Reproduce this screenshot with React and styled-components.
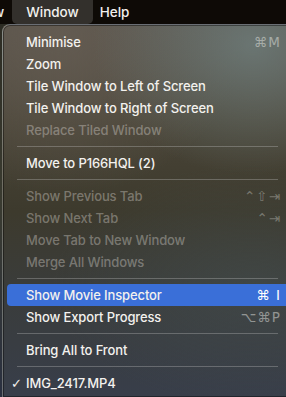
import React from "react";
import styled, { createGlobalStyle } from "styled-components";

const Global = createGlobalStyle`
  html, body { margin: 0; padding: 0; }
  body {
    width: 286px; height: 397px; overflow: hidden;
    background: linear-gradient(180deg, #2b2a22 0%, #3a3b30 50%, #2a3040 100%);
    font-family: Inter, "Noto Sans", sans-serif;
    -webkit-font-smoothing: antialiased;
  }
`;

const Screen = styled.div`
  display: flex;
  flex-direction: column;
  width: 286px;
  height: 397px;
  overflow: hidden;
`;

const MenuBar = styled.div`
  height: 24px;
  flex: none;
  background: #0e0a06;
  display: flex;
  align-items: stretch;
  color: #f2f0ee;
  font-size: 13.5px;
  font-weight: 500;
  overflow: hidden;
`;

const BarItem = styled.div`
  display: flex;
  align-items: center;
  flex: none;
  padding: ${(p) => p.$pad || "0 12px"};
  margin-left: ${(p) => p.$ml || 0}px;
  border-radius: 0 0 5px 5px;
  background: ${(p) => (p.$active ? "#33302c" : "transparent")};
`;

const Menu = styled.div`
  margin-left: 2px;
  width: 292px;
  flex: 1;
  border-radius: 8px 8px 0 0;
  border: 1px solid rgba(200, 200, 195, 0.35);
  border-right: none;
  border-bottom: none;
  box-shadow: inset 0 0 0 1px rgba(0,0,0,0.4);
  padding: 6px 0 0 0;
  box-sizing: border-box;
  display: flex;
  flex-direction: column;
  background:
    radial-gradient(ellipse 160px 130px at 250px 20px, rgba(110,124,122,0.85), rgba(110,124,122,0) 100%),
    radial-gradient(ellipse 180px 160px at 60px 10px, rgba(100,92,82,0.9), rgba(100,92,82,0) 100%),
    radial-gradient(ellipse 200px 120px at 250px 260px, rgba(70,80,80,0.5), rgba(70,80,80,0) 100%),
    linear-gradient(180deg, #58524a 0%, #4a4538 25%, #3d3a2d 50%, #3a3c3a 70%, #383e4a 100%);
`;

const Item = styled.div`
  height: 22px;
  margin: 0 4px;
  padding: 0 9px 0 19px;
  border-radius: 4px;
  display: flex;
  align-items: center;
  justify-content: space-between;
  font-size: 13px;
  font-weight: 500;
  letter-spacing: -0.12px;
  color: ${(p) => (p.$disabled ? "rgba(235,230,225,0.36)" : "#f3f1ee")};
  background: ${(p) => (p.$active ? "#3a6fd8" : "transparent")};
  position: relative;
`;

const Check = styled.span`
  position: absolute;
  left: 4px;
  font-size: 13px;
  font-family: "DejaVu Sans", sans-serif;
`;

const Shortcut = styled.span`
  font-family: "DejaVu Sans", "Noto Sans", sans-serif;
  font-size: 13.5px;
  color: ${(p) =>
    p.$active ? "#ffffff" : p.$disabled ? "rgba(230,230,225,0.35)" : "rgba(230,230,225,0.5)"};
  letter-spacing: 1px;
  display: flex;
  gap: 2px;
`;

const Separator = styled.div`
  height: 11px;
  display: flex;
  align-items: center;
  padding: 0 16px 0 14px;
  &::after {
    content: "";
    flex: 1;
    height: 1px;
    background: rgba(200, 200, 200, 0.32);
  }
`;

const items = [
  { t: "Minimise", s: "⌘M" },
  { t: "Zoom" },
  { t: "Tile Window to Left of Screen" },
  { t: "Tile Window to Right of Screen" },
  { t: "Replace Tiled Window", d: true },
  "sep",
  { t: "Move to P166HQL (2)" },
  "sep",
  { t: "Show Previous Tab", s: "⌃⇧⇥", d: true },
  { t: "Show Next Tab", s: "⌃⇥", d: true },
  { t: "Move Tab to New Window", d: true },
  { t: "Merge All Windows", d: true },
  "sep",
  { t: "Show Movie Inspector", s: "⌘ I", a: true },
  { t: "Show Export Progress", s: "⌥⌘P" },
  "sep",
  { t: "Bring All to Front" },
  "sep",
  { t: "IMG_2417.MP4", c: true },
];

export default function App() {
  return (
    <Screen>
      <Global />
      <MenuBar>
        <BarItem $pad="0 8px 0 0" $ml={-7}>w</BarItem>
        <BarItem $active $pad="0 14px">Window</BarItem>
        <BarItem $pad="0 7px">Help</BarItem>
      </MenuBar>
      <Menu>
        {items.map((it, i) =>
          it === "sep" ? (
            <Separator key={i} />
          ) : (
            <Item key={i} $disabled={it.d} $active={it.a}>
              {it.c && <Check>✓</Check>}
              <span>{it.t}</span>
              {it.s && (
                <Shortcut $active={it.a} $disabled={it.d}>
                  {it.s}
                </Shortcut>
              )}
            </Item>
          )
        )}
      </Menu>
    </Screen>
  );
}
